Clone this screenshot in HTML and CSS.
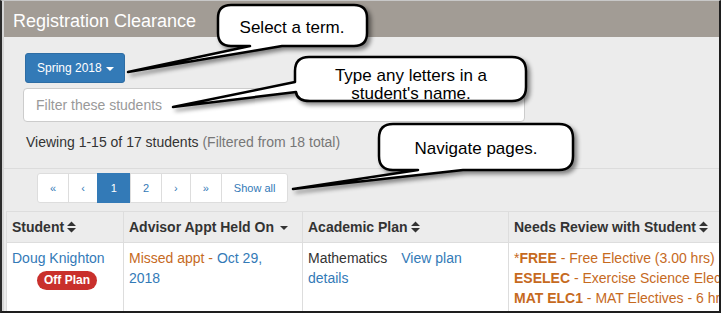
FILE: index.html
```html
<!DOCTYPE html>
<html lang="en">

<head>
    <meta charset="UTF-8">
    <meta name="viewport" content="width=device-width, initial-scale=1.0">
    <title>Registration Clearance</title>
    <link rel="stylesheet" href="styles.css">
</head>

<body>

    <div class="frame">
        <div class="inner">
            <div class="panel-heading">Registration Clearance</div>

            <div class="panel-body">
                <div class="controls">
                    <button class="btn-term" type="button">Spring 2018 <span class="caret"></span></button>
                    <input class="filter" type="text" placeholder="Filter these students">
                    <p class="count">Viewing 1-15 of 17 students <span class="muted">(Filtered from 18 total)</span></p>
                </div>

                <hr class="divider">

                <ul class="pagination">
                    <li><a href="#">&laquo;</a></li>
                    <li><a href="#">&lsaquo;</a></li>
                    <li class="active"><a href="#">1</a></li>
                    <li><a href="#">2</a></li>
                    <li><a href="#">&rsaquo;</a></li>
                    <li><a href="#">&raquo;</a></li>
                    <li><a href="#">Show all</a></li>
                </ul>

                <div class="table-wrap">
                    <table class="students">
                        <thead>
                            <tr>
                                <th class="col-student">Student<svg class="sort" width="9" height="12" viewBox="0 0 9 12"><path d="M0 5 L4.5 0.5 L9 5 Z M0 7 L4.5 11.5 L9 7 Z"/></svg></th>
                                <th class="col-appt">Advisor Appt Held On<span class="sort-down"></span></th>
                                <th class="col-plan">Academic Plan<svg class="sort" width="9" height="12" viewBox="0 0 9 12"><path d="M0 5 L4.5 0.5 L9 5 Z M0 7 L4.5 11.5 L9 7 Z"/></svg></th>
                                <th class="col-review">Needs Review with Student<svg class="sort" width="9" height="12" viewBox="0 0 9 12"><path d="M0 5 L4.5 0.5 L9 5 Z M0 7 L4.5 11.5 L9 7 Z"/></svg></th>
                            </tr>
                        </thead>
                        <tbody>
                            <tr>
                                <td>
                                    <a href="#">Doug Knighton</a>
                                    <span class="badge-off">Off Plan</span>
                                </td>
                                <td><span class="warn">Missed appt - </span><a href="#">Oct 29, 2018</a></td>
                                <td>Mathematics <a class="plan-link" href="#">View plan details</a></td>
                                <td class="review">
                                    <div>*<b>FREE</b> - Free Elective (3.00 hrs)</div>
                                    <div><b>ESELEC</b> - Exercise Science Elective (3.00 hrs)</div>
                                    <div><b>MAT ELC1</b> - MAT Electives - 6 hrs (6.00 hrs)</div>
                                </td>
                            </tr>
                        </tbody>
                    </table>
                </div>
            </div>
        </div>

        <!-- annotation bubbles drawn over the screenshot -->
        <svg class="callouts" width="721" height="313" viewBox="0 0 721 313">
            <path class="bubble" d="M231 5 H354 Q367 5 367 18 V33 Q367 46 354 46 H282 L128 72 L250 46 H231 Q218 46 218 33 V18 Q218 5 231 5 Z"/>
            <text x="292" y="33">Select a term.</text>

            <path class="bubble" d="M309 57 H512 Q526 57 526 71 V87 Q526 101 512 101 H310 Q297 101 296 92 L173 107 L295 82 V71 Q295 57 309 57 Z"/>
            <text x="411" y="81">Type any letters in a</text>
            <text x="411" y="99">student's name.</text>

            <path class="bubble" d="M393 124 H559 Q573 124 573 138 V156 Q573 170 559 170 H463 L293 189 L418 170 H393 Q379 170 379 156 V138 Q379 124 393 124 Z"/>
            <text x="476" y="154">Navigate pages.</text>
        </svg>
    </div>

</body>

</html>
```

FILE: styles.css
```css
body {
    margin: 0;
    padding: 0;
    font-family: "Liberation Sans", Arial, sans-serif;
    font-size: 14px;
    color: #333;
    background-color: #fff;
}

.frame {
    position: relative;
    width: 721px;
    height: 313px;
    box-sizing: border-box;
    border-top: 1px solid #c8c8c8;
    border-left: 2px solid #2b2b2b;
    border-right: 2px solid #1e1e1e;
    border-bottom: 2px solid #1e1e1e;
    overflow: hidden;
}

.inner {
    height: 100%;
    border-left: 2px solid #d6d6d6;
    background-color: #ececec;
}

.panel-heading {
    height: 36px;
    box-sizing: border-box;
    padding: 9px 0 0 9px;
    background-color: #a29c95;
    color: #fff;
    font-size: 18px;
    line-height: 22px;
}

.controls {
    padding: 16px 19px 0 19px;
}

.btn-term {
    display: block;
    height: 30px;
    margin-left: 2px;
    padding: 0 10px 0 11px;
    border: 1px solid #2e6da4;
    border-radius: 3px;
    background-color: #337ab7;
    color: #fff;
    font-family: "Liberation Sans", Arial, sans-serif;
    font-size: 12px;
}

.caret {
    display: inline-block;
    width: 0;
    height: 0;
    margin-left: 1px;
    vertical-align: middle;
    border-top: 4px solid #fff;
    border-left: 4px solid transparent;
    border-right: 4px solid transparent;
}

.filter {
    display: block;
    width: 502px;
    height: 34px;
    box-sizing: border-box;
    margin-top: 5px;
    padding: 0 12px;
    border: 1px solid #ccc;
    border-radius: 4px;
    background-color: #fff;
    font-family: "Liberation Sans", Arial, sans-serif;
    font-size: 14px;
}

.filter::placeholder {
    color: #999;
}

.count {
    margin: 10px 0 0 3px;
    line-height: 20px;
}

.muted {
    color: #777;
}

.divider {
    margin: 16px 0 0 0;
    border: 0;
    border-top: 1px solid #dcdcdc;
}

.pagination {
    display: flex;
    margin: 4px 0 0 33px;
    padding: 0;
    list-style: none;
}

.pagination li a {
    display: block;
    padding: 6px 12px;
    margin-left: -1px;
    border: 1px solid #ddd;
    background-color: #fff;
    color: #337ab7;
    font-size: 11px;
    line-height: 16px;
    text-decoration: none;
}

.pagination li:first-child a {
    margin-left: 0;
    border-radius: 3px 0 0 3px;
}

.pagination li:last-child a {
    border-radius: 0 3px 3px 0;
}

.pagination li.active a {
    background-color: #337ab7;
    border-color: #337ab7;
    color: #fff;
    padding: 6px 13px;
}

.table-wrap {
    margin: 8px 0 0 2px;
}

.students {
    table-layout: fixed;
    width: 860px;
    border-collapse: separate;
    border-spacing: 0;
    border-top: 1px solid #ddd;
}

.students th,
.students td {
    box-sizing: border-box;
    padding: 5px 8px 5px 5px;
    border-left: 1px solid #ddd;
    border-bottom: 1px solid #ddd;
    line-height: 20px;
    text-align: left;
    vertical-align: top;
}

.students th {
    font-weight: bold;
    white-space: nowrap;
}

.students td {
    background-color: #fff;
}

.col-student {
    width: 117px;
}

.col-appt {
    width: 179px;
}

.col-plan {
    width: 206px;
}

.col-review {
    width: 358px;
}

.sort {
    margin-left: 3px;
    vertical-align: -1px;
    fill: #333;
}

.sort-down {
    display: inline-block;
    width: 0;
    height: 0;
    margin-left: 6px;
    vertical-align: middle;
    border-top: 4px solid #333;
    border-left: 4px solid transparent;
    border-right: 4px solid transparent;
}

a {
    color: #337ab7;
    text-decoration: none;
}

.warn {
    color: #c66a1e;
}

.plan-link {
    margin-left: 10px;
}

.badge-off {
    display: block;
    width: fit-content;
    margin: 3px 0 0 25px;
    padding: 0 7px;
    border-radius: 10px;
    background-color: #c9302c;
    color: #fff;
    font-size: 12px;
    font-weight: bold;
    line-height: 19px;
}

.review {
    color: #c66a1e;
    white-space: nowrap;
}

.callouts {
    position: absolute;
    top: -1px;
    left: -2px;
    pointer-events: none;
}

.bubble {
    fill: #fff;
    stroke: #000;
    stroke-width: 2.5;
    stroke-linejoin: round;
    filter: drop-shadow(3px 3px 2px rgba(0, 0, 0, 0.45));
}

.callouts text {
    font-family: "Liberation Sans", Arial, sans-serif;
    font-size: 17px;
    fill: #000;
    text-anchor: middle;
}
```
